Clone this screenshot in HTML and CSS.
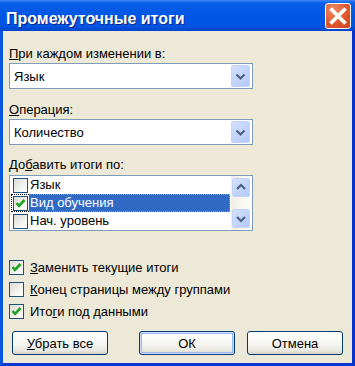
FILE: index.html
```html
<!DOCTYPE html>
<html lang="ru">
<head>
    <meta charset="UTF-8">
    <meta name="viewport" content="width=device-width, initial-scale=1.0">
    <title>Промежуточные итоги</title>
    <link rel="stylesheet" href="styles.css">
</head>
<body>
    <div class="window">
        <div class="titlebar">
            <span class="title">Промежуточные итоги</span>
            <button class="close" aria-label="Закрыть">
                <svg width="24" height="24" viewBox="0 0 24 24">
                    <path d="M4.5 4.5 L19.5 19.5 M19.5 4.5 L4.5 19.5" stroke="#fff" stroke-width="3.8" fill="none"/>
                </svg>
            </button>
        </div>

        <div class="frame">
            <div class="label"><u>П</u>ри каждом изменении в:</div>
            <div class="combo">
                <span class="combo-value">Язык</span>
                <span class="drop-btn">
                    <svg width="17" height="20" viewBox="0 0 17 20"><polyline points="4.5,8.5 8.5,12.5 12.5,8.5" stroke="#4d6185" stroke-width="2.2" fill="none"/></svg>
                </span>
            </div>

            <div class="label label-gap"><u>О</u>перация:</div>
            <div class="combo">
                <span class="combo-value">Количество</span>
                <span class="drop-btn">
                    <svg width="17" height="20" viewBox="0 0 17 20"><polyline points="4.5,8.5 8.5,12.5 12.5,8.5" stroke="#4d6185" stroke-width="2.2" fill="none"/></svg>
                </span>
            </div>

            <div class="label label-list">До<u>б</u>авить итоги по:</div>
            <div class="listbox">
                <div class="list-items">
                    <div class="list-row">
                        <span class="list-check"><span class="check"></span></span>
                        <span class="list-text">Язык</span>
                    </div>
                    <div class="list-row selected">
                        <span class="list-check">
                            <span class="check">
                                <svg width="13" height="13" viewBox="0 0 13 13"><polyline points="2.5,6 5,8.8 10.5,3" stroke="#21a121" stroke-width="2.6" fill="none"/></svg>
                            </span>
                        </span>
                        <span class="list-text">Вид обучения</span>
                    </div>
                    <div class="list-row">
                        <span class="list-check"><span class="check"></span></span>
                        <span class="list-text">Нач. уровень</span>
                    </div>
                </div>
                <div class="scrollbar">
                    <span class="scroll-btn">
                        <svg width="16" height="17" viewBox="0 0 16 17"><polyline points="4,10 8,6 12,10" stroke="#4d6185" stroke-width="2.2" fill="none"/></svg>
                    </span>
                    <span class="scroll-track"></span>
                    <span class="scroll-btn">
                        <svg width="16" height="17" viewBox="0 0 16 17"><polyline points="4,7 8,11 12,7" stroke="#4d6185" stroke-width="2.2" fill="none"/></svg>
                    </span>
                </div>
            </div>

            <div class="options">
                <div class="option">
                    <span class="check">
                        <svg width="13" height="13" viewBox="0 0 13 13"><polyline points="2.5,6 5,8.8 10.5,3" stroke="#21a121" stroke-width="2.6" fill="none"/></svg>
                    </span>
                    <span><u>З</u>аменить текущие итоги</span>
                </div>
                <div class="option">
                    <span class="check"></span>
                    <span><u>К</u>онец страницы между группами</span>
                </div>
                <div class="option">
                    <span class="check">
                        <svg width="13" height="13" viewBox="0 0 13 13"><polyline points="2.5,6 5,8.8 10.5,3" stroke="#21a121" stroke-width="2.6" fill="none"/></svg>
                    </span>
                    <span>Ито<u>г</u>и под данными</span>
                </div>
            </div>

            <div class="buttons">
                <button class="btn btn-remove"><u>У</u>брать все</button>
                <button class="btn btn-default">ОК</button>
                <button class="btn">Отмена</button>
            </div>
        </div>
    </div>
</body>
</html>
```

FILE: styles.css
```css
* {
    box-sizing: border-box;
}
body {
    margin: 0;
    font-family: "Liberation Sans", Arial, sans-serif;
    font-size: 13px;
    color: #000;
    background-color: #fff;
}
.window {
    width: 355px;
    height: 366px;
    display: flex;
    flex-direction: column;
    background-color: #ece9d8;
}
.titlebar {
    height: 31px;
    display: flex;
    justify-content: space-between;
    align-items: flex-start;
    background: linear-gradient(#3d8af7 0, #0a5ee8 3px, #0058e6 40%, #0054e3 85%, #0044c8 100%);
}
.title {
    margin: 10px 0 0 6px;
    font-size: 16px;
    font-weight: bold;
    line-height: 18px;
    color: #fff;
    text-shadow: 1px 1px #0a2280;
}
.close {
    width: 26px;
    height: 26px;
    margin: 3px 4px 0 0;
    padding: 0;
    border: 1px solid #fff;
    border-radius: 3px;
    background: radial-gradient(circle at 30% 25%, #ec8a68 0, #e1582f 55%, #c9421c 100%);
    display: flex;
    align-items: center;
    justify-content: center;
}
.frame {
    flex: 1;
    display: flex;
    flex-direction: column;
    padding: 15px 0 0 6px;
    border: 3px solid #0838d0;
    border-top: 0;
    border-left-color: #0855dd;
    border-right-color: #0632cf;
}
.label {
    line-height: 16px;
    height: 16px;
}
.label-gap {
    margin-top: 13px;
}
.label-list {
    margin-top: 12px;
}
.combo {
    width: 244px;
    height: 26px;
    margin-top: 1px;
    padding: 1px;
    border: 1px solid #7f9db9;
    background-color: #fff;
    display: flex;
    align-items: center;
}
.combo-value {
    flex: 1;
    padding-left: 3px;
}
.drop-btn {
    width: 19px;
    height: 22px;
    margin-right: 1px;
    border: 1px solid #c3d3fb;
    border-radius: 2px;
    background: linear-gradient(135deg, #d4e1fd, #b4c9f7);
    display: flex;
    align-items: center;
    justify-content: center;
}
.listbox {
    width: 244px;
    height: 56px;
    margin-top: 2px;
    border: 1px solid #7f9db9;
    background-color: #fff;
    display: flex;
}
.list-items {
    flex: 1;
    padding: 0 1px;
}
.list-row {
    height: 18px;
    display: flex;
}
.list-check {
    width: 18px;
    padding-left: 1px;
    border: 1px dotted transparent;
    border-right: 0;
    display: flex;
    align-items: center;
}
.list-text {
    flex: 1;
    padding-left: 1px;
    line-height: 16px;
    border: 1px dotted transparent;
    border-left: 0;
}
.selected .list-check {
    border-color: #000;
}
.selected .list-text {
    background-color: #316ac5;
    color: #fff;
    border-color: #cf953a;
}
.check {
    width: 15px;
    height: 15px;
    flex: none;
    border: 1px solid #1c5180;
    background: linear-gradient(135deg, #dcdcd5, #f6f6f3 70%, #fff);
    display: flex;
    align-items: center;
    justify-content: center;
}
.scrollbar {
    width: 21px;
    padding: 2px 2px 2px 1px;
    display: flex;
    flex-direction: column;
    background: linear-gradient(to right, #f1efe6, #fdfdfb);
}
.scroll-btn {
    height: 19px;
    border: 1px solid #c3d3fb;
    border-radius: 2px;
    background: linear-gradient(135deg, #d4e1fd, #b4c9f7);
    display: flex;
    align-items: center;
    justify-content: center;
}
.scroll-track {
    flex: 1;
}
.options {
    margin-top: 25px;
}
.option {
    height: 22px;
    display: flex;
    align-items: center;
    gap: 6px;
}
.buttons {
    margin-top: 9px;
    padding-left: 3px;
    display: flex;
    gap: 12px;
}
.btn {
    width: 96px;
    height: 24px;
    padding: 0;
    border: 1px solid #003c74;
    border-radius: 3px;
    background: linear-gradient(#ffffff, #f4f4f0 55%, #e8e7e0 85%, #d6d0c5);
    font-family: "Liberation Sans", Arial, sans-serif;
    font-size: 13px;
    color: #000;
}
.btn-remove {
    margin-right: 19px;
}
.btn-default {
    box-shadow: inset 0 0 0 1px #cedcf9, inset 0 0 0 2px #9ab8ee;
}
```
